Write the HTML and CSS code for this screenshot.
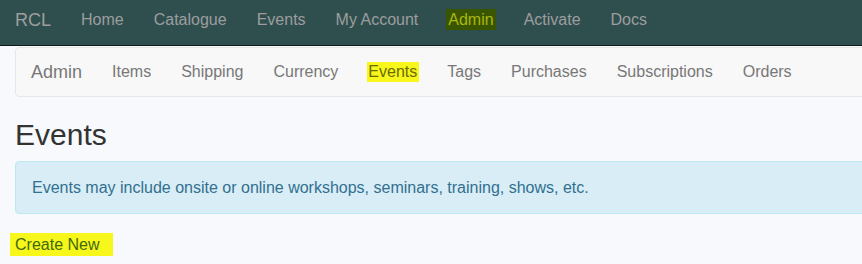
FILE: index.html
```html
<!DOCTYPE html>
<html lang="en">
<head>
    <meta charset="UTF-8">
    <meta name="viewport" content="width=device-width, initial-scale=1.0">
    <title>Events</title>
    <link rel="stylesheet" href="styles.css">
</head>
<body>
    <nav class="topbar">
        <a class="brand" href="#">RCL</a>
        <ul class="top-links">
            <li><a href="#">Home</a></li>
            <li><a href="#">Catalogue</a></li>
            <li><a href="#">Events</a></li>
            <li><a href="#">My Account</a></li>
            <li><a href="#"><span class="mark-dark">Admin</span></a></li>
            <li><a href="#">Activate</a></li>
            <li><a href="#">Docs</a></li>
        </ul>
    </nav>

    <div class="container">
        <nav class="subnav">
            <span class="sub-brand">Admin</span>
            <ul class="sub-links">
                <li><a href="#">Items</a></li>
                <li><a href="#">Shipping</a></li>
                <li><a href="#">Currency</a></li>
                <li><a href="#"><span class="mark">Events</span></a></li>
                <li><a href="#">Tags</a></li>
                <li><a href="#">Purchases</a></li>
                <li><a href="#">Subscriptions</a></li>
                <li><a href="#">Orders</a></li>
            </ul>
        </nav>

        <h2 class="page-title">Events</h2>

        <div class="alert-info">
            Events may include onsite or online workshops, seminars, training, shows, etc.
        </div>

        <p class="actions"><a href="#"><span class="mark mark-create">Create New</span></a></p>
    </div>
</body>
</html>
```

FILE: styles.css
```css
body {
    margin: 0;
    font-family: "Liberation Sans", Arial, sans-serif;
    font-size: 16px;
    color: #333;
    background-color: #f7f9fc;
    overflow: hidden;
}

a {
    text-decoration: none;
}

ul {
    list-style: none;
    margin: 0;
    padding: 0;
}

/* top bar */
.topbar {
    display: flex;
    height: 45px;
    background-color: #2f4f4f;
    border-bottom: 1px solid #101a1a;
}

.brand {
    padding: 10px 15px 0 15px;
    font-size: 18px;
    line-height: 20px;
    color: #9d9d9d;
}

.top-links {
    display: flex;
}

.top-links a {
    display: block;
    padding: 10px 15px 0 15px;
    line-height: 20px;
    color: #9d9d9d;
}

.mark-dark {
    background-color: #3a5500;
    color: #a9b80e;
    padding: 2px 2px;
    margin: 0 -2px;
}

/* page */
.container {
    width: 1140px;
    padding: 0 15px;
}

.subnav {
    display: flex;
    margin-top: 1px;
    height: 48px;
    background-color: #f8f8f8;
    border: 1px solid #e7e7e7;
    border-radius: 4px;
}

.sub-brand {
    padding: 14px 15px 0 15px;
    font-size: 18px;
    line-height: 20px;
    color: #777;
}

.sub-links {
    display: flex;
}

.sub-links a {
    display: block;
    padding: 14px 15px 0 15px;
    line-height: 20px;
    color: #777;
}

.mark {
    background-color: #f7f71c;
    color: #6b6b00;
    padding: 1px 2px 2px 1px;
    margin: 0 -2px 0 -1px;
}

.page-title {
    margin: 21px 0 10px 0;
    font-size: 30px;
    font-weight: 500;
    line-height: 33px;
    color: #333;
}

.alert-info {
    padding: 15px 16px;
    line-height: 21px;
    background-color: #d9edf7;
    border: 1px solid #bce8f1;
    border-radius: 4px;
    color: #31708f;
}

.actions {
    margin: 20px 0 0 0;
    line-height: 22px;
}

.mark-create {
    color: #3f6a0c;
    padding: 3px 14px 4px 5px;
    margin-left: -5px;
}
```
